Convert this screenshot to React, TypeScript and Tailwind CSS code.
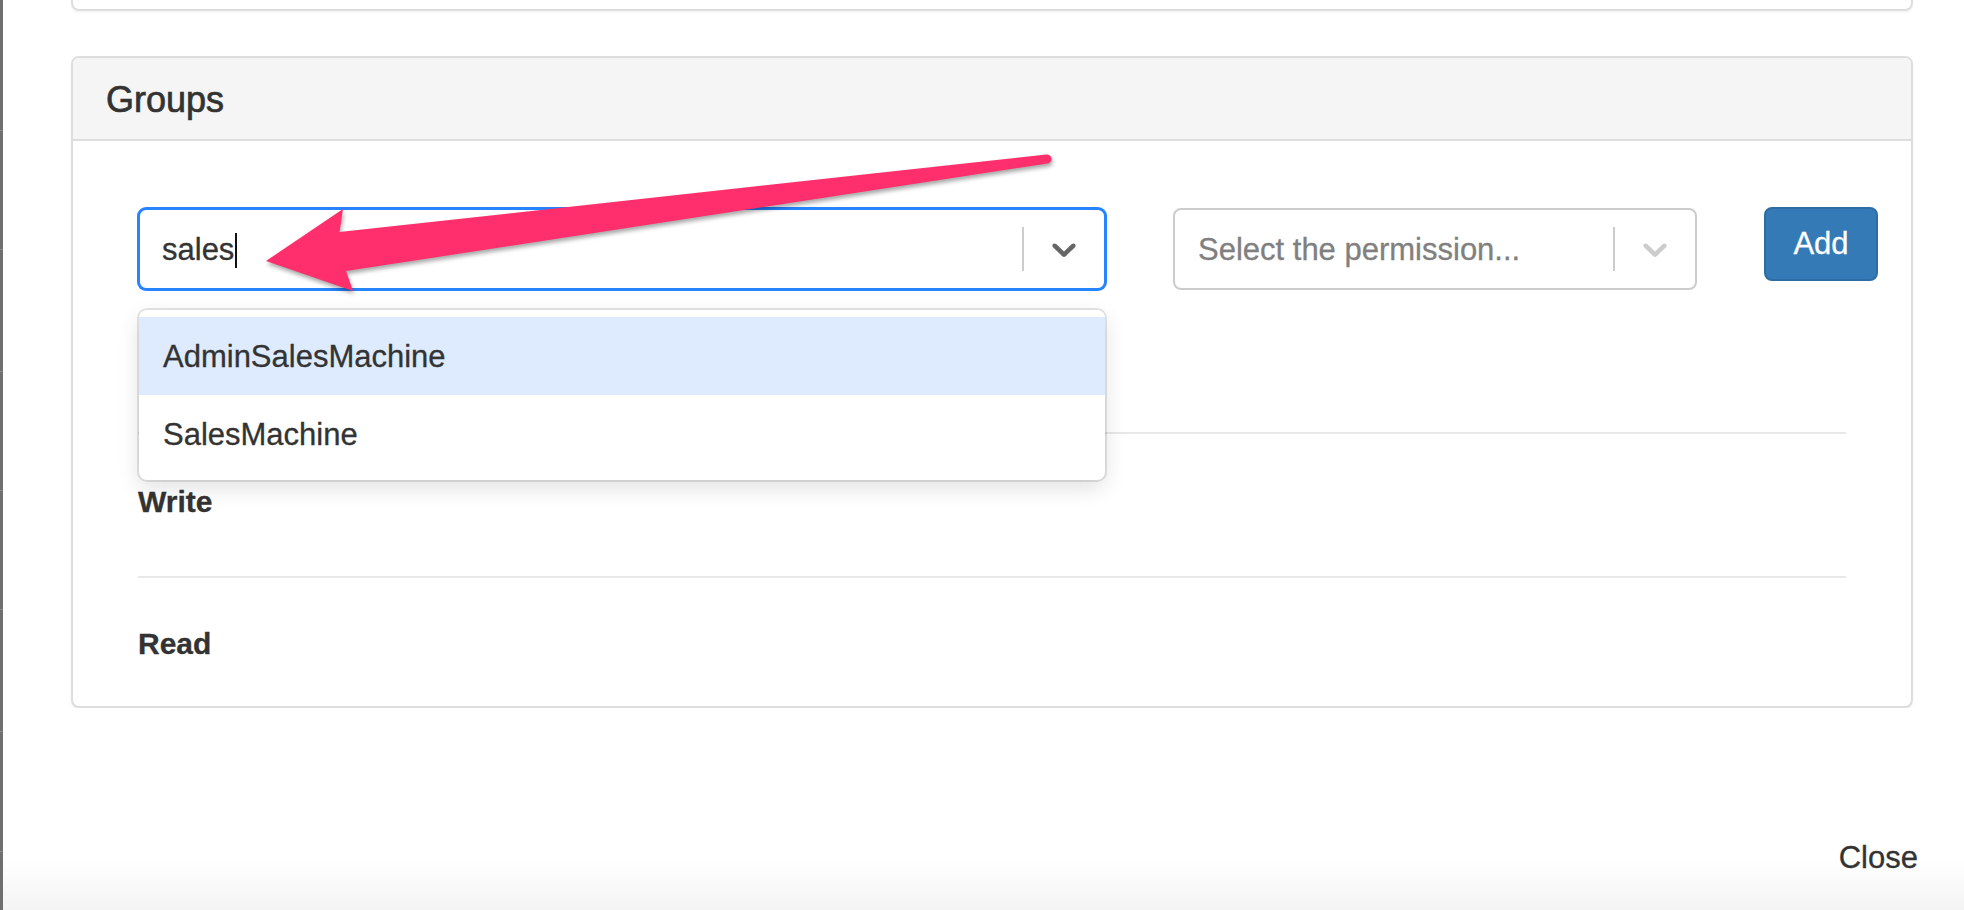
const chevronPath =
  "M4.516 7.548c0.436-0.446 1.043-0.481 1.576 0l3.908 3.747 3.908-3.747c0.533-0.481 1.141-0.446 1.574 0 0.436 0.445 0.408 1.197 0 1.615-0.406 0.418-4.695 4.502-4.695 4.502-0.217 0.223-0.502 0.335-0.787 0.335s-0.57-0.112-0.789-0.335c0 0-4.287-4.084-4.695-4.502s-0.436-1.17 0-1.615z";

function Chevron({ className }: { className: string }) {
  return (
    <svg width="40" height="40" viewBox="0 0 20 20" className={className}>
      <path d={chevronPath} />
    </svg>
  );
}

function Arrow() {
  return (
    <svg
      width="1964"
      height="910"
      viewBox="0 0 1964 910"
      className="pointer-events-none absolute left-0 top-0 z-50 drop-shadow-[1px_3px_2px_rgba(0,0,0,0.35)]"
    >
      <path
        d="M266 261 L343 209 L339.5 232 L1046.4 154.5 A4.5 4.5 0 0 1 1047.6 163.5 L346 271 L353 291 Z"
        fill="#ff2e6c"
      />
    </svg>
  );
}

export default function App() {
  const options = ["AdminSalesMachine", "SalesMachine"];
  return (
    <div className="relative flex h-[910px] w-full overflow-hidden bg-white font-['Liberation_Sans',Arial,sans-serif] text-[#333] [-webkit-text-stroke:0.3px_currentColor]">
      {/* page behind the modal */}
      <div className="flex w-[3px] shrink-0 flex-col bg-[#6f6f6f]">
        <div className="h-[131px] border-b border-[#8c8c8c]" />
        <div className="h-[119px] border-b border-[#8c8c8c]" />
        <div className="h-[122px] border-b border-[#8c8c8c]" />
        <div className="h-[119px] border-b border-[#8c8c8c]" />
        <div className="h-[119px] border-b border-[#8c8c8c]" />
        <div className="h-[122px] border-b border-[#8c8c8c]" />
        <div className="h-[120px] border-b border-[#8c8c8c]" />
      </div>

      <div className="flex flex-1 flex-col">
        <div className="ml-[68px] w-[1842px]">
          <div className="h-[11px] rounded-b-[8px] border-x-2 border-b-2 border-[#ddd] shadow-[0_2px_2px_rgba(0,0,0,0.04)]" />

          <div className="mt-[45px] rounded-[8px] border-2 border-[#ddd] bg-white shadow-[0_2px_2px_rgba(0,0,0,0.05)]">
            <div className="flex h-[83px] items-center rounded-t-[6px] border-b-2 border-[#ddd] bg-[#f5f5f5] pl-[33px] pt-[2px] text-[36px] [-webkit-text-stroke:0.7px_#333]">
              Groups
            </div>

            <div className="pl-[65px] pr-[33px] pt-[67px]">
              <div className="flex items-start gap-[67px]">
                <div className="relative w-[968px] shrink-0">
                  <div className="flex h-[82px] items-center rounded-[8px] border-2 border-[#2684ff] bg-white shadow-[0_0_0_1px_#2684ff]">
                    <div className="flex flex-1 items-center pl-[22px] pt-[2px] text-[31px]">
                      sales
                      <span className="ml-[1px] h-[35px] w-[2px] bg-[#111]" />
                    </div>
                    <div className="h-[44px] w-[2px] bg-[#ccc]" />
                    <div className="flex w-[80px] justify-center">
                      <Chevron className="fill-[#666]" />
                    </div>
                  </div>

                  <div className="absolute left-[1px] right-[1px] top-[102px] z-20 rounded-[8px] bg-white py-[7px] shadow-[0_0_0_2px_rgba(0,0,0,0.1),0_8px_22px_rgba(0,0,0,0.12)]">
                    {options.map((o, i) => (
                      <div
                        key={o}
                        className={
                          i === 0
                            ? "flex h-[78px] items-center bg-[#deebff] pl-[24px] pt-[2px] text-[31px]"
                            : "flex h-[78px] items-center pl-[24px] pt-[2px] text-[31px]"
                        }
                      >
                        {o}
                      </div>
                    ))}
                  </div>
                </div>

                <div className="flex h-[82px] w-[524px] shrink-0 items-center rounded-[8px] border-2 border-[#ccc] bg-white">
                  <div className="flex-1 pl-[23px] pt-[2px] text-[31px] text-[#808080]">
                    Select the permission...
                  </div>
                  <div className="h-[44px] w-[2px] bg-[#ccc]" />
                  <div className="flex w-[80px] justify-center">
                    <Chevron className="fill-[#ccc]" />
                  </div>
                </div>

                <button className="-mt-px flex h-[74px] w-[114px] shrink-0 items-center justify-center rounded-[8px] border-2 border-[#2e6da4] bg-[#337ab7] text-[31px] text-white">
                  Add
                </button>
              </div>

              <div className="mr-[32px] mt-[142px]">
                <div className="flex h-[144px] items-center border-t-2 border-[#e8e8e8] pb-[8px] text-[30px] font-bold">
                  Write
                </div>
                <div className="flex h-[130px] items-center border-t-2 border-[#e8e8e8] pt-[2px] text-[30px] font-bold">
                  Read
                </div>
              </div>
            </div>
          </div>
        </div>

        <div className="flex flex-1 justify-end bg-[linear-gradient(to_bottom,#ffffff_75%,#f4f4f4)] pr-[46px] pt-[134px]">
          <span className="text-[31px] leading-none">Close</span>
        </div>
      </div>

      <Arrow />
    </div>
  );
}
